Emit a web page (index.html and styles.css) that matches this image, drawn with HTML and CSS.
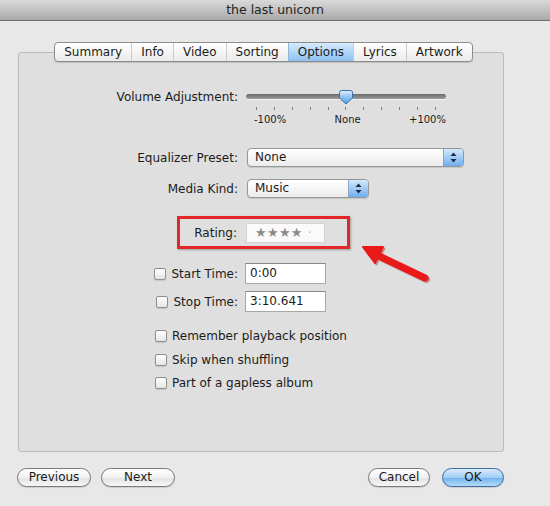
FILE: index.html
```html
<!DOCTYPE html>
<html>
<head>
<meta charset="utf-8">
<title>the last unicorn</title>
<link rel="stylesheet" href="styles.css">
</head>
<body>
<div class="window">
  <div class="titlebar">the last unicorn</div>
  <div class="content">
    <div class="tabs">
      <div class="tabgroup">
        <div class="tab">Summary</div>
        <div class="tab">Info</div>
        <div class="tab">Video</div>
        <div class="tab">Sorting</div>
        <div class="tab active">Options</div>
        <div class="tab">Lyrics</div>
        <div class="tab">Artwork</div>
      </div>
    </div>
    <div class="panel">
      <div class="row row-volume">
        <div class="lbl">Volume Adjustment:</div>
        <div class="slider">
          <div class="track"></div>
          <svg class="thumb" width="16" height="16" viewBox="0 0 16 16">
            <defs>
              <linearGradient id="tg" x1="0" y1="0" x2="0" y2="1">
                <stop offset="0" stop-color="#e2f0fd"/>
                <stop offset="0.5" stop-color="#8cc2f2"/>
                <stop offset="1" stop-color="#4f9de6"/>
              </linearGradient>
            </defs>
            <path d="M3.5 1.5 H12.5 Q14.5 1.5 14.5 3.5 V9 L8 15 L1.5 9 V3.5 Q1.5 1.5 3.5 1.5 Z" fill="url(#tg)" stroke="#3c6ea8" stroke-width="1"/>
          </svg>
          <div class="ticks">
            <span></span><span></span><span></span><span></span><span></span><span></span><span></span><span></span><span></span><span></span><span></span>
          </div>
          <div class="scale"><span>-100%</span><span>None</span><span>+100%</span></div>
        </div>
      </div>
      <div class="row row-eq">
        <div class="lbl">Equalizer Preset:</div>
        <div class="popup popup-eq">
          <div class="val">None</div>
          <div class="step">
            <svg width="7" height="11" viewBox="0 0 7 11"><path d="M3.5 0.5 L6.5 4 H0.5 Z M3.5 10.5 L6.5 7 H0.5 Z" fill="#1d2c44"/></svg>
          </div>
        </div>
      </div>
      <div class="row row-media">
        <div class="lbl">Media Kind:</div>
        <div class="popup popup-media">
          <div class="val">Music</div>
          <div class="step">
            <svg width="7" height="11" viewBox="0 0 7 11"><path d="M3.5 0.5 L6.5 4 H0.5 Z M3.5 10.5 L6.5 7 H0.5 Z" fill="#1d2c44"/></svg>
          </div>
        </div>
      </div>
      <div class="row row-rating">
        <div class="ratingbox">
          <div class="rlbl">Rating:</div>
          <div class="rfield"><span class="stars">★★★★</span><span class="dot">·</span></div>
        </div>
      </div>
      <div class="row row-start">
        <div class="lbl chklbl"><span class="chk"></span>Start Time:</div>
        <div class="field">0:00</div>
      </div>
      <div class="row row-stop">
        <div class="lbl chklbl"><span class="chk"></span>Stop Time:</div>
        <div class="field">3:10.641</div>
      </div>
      <div class="row opt opt-first"><span class="chk"></span>Remember playback position</div>
      <div class="row opt opt-second"><span class="chk"></span>Skip when shuffling</div>
      <div class="row opt opt-third"><span class="chk"></span>Part of a gapless album</div>
    </div>
    <div class="buttons">
      <div class="btn btn-prev">Previous</div>
      <div class="btn btn-next">Next</div>
      <div class="spacer"></div>
      <div class="btn btn-cancel">Cancel</div>
      <div class="btn btn-ok">OK</div>
    </div>
  </div>
  <svg class="arrow" width="80" height="46" viewBox="0 0 80 46">
    <g transform="translate(1.5,1.5)" fill="#7a0a0a" stroke="#7a0a0a" opacity="0.35">
      <line x1="22" y1="15" x2="70" y2="38" stroke-width="7" stroke-linecap="round"/>
      <path d="M8 7 L28 7 L20 23 Z" stroke-width="2" stroke-linejoin="round"/>
    </g>
    <g fill="#ea1a1a" stroke="#ea1a1a">
      <line x1="22" y1="15" x2="70" y2="38" stroke-width="7" stroke-linecap="round"/>
      <path d="M8 7 L28 7 L20 23 Z" stroke-width="2" stroke-linejoin="round"/>
    </g>
  </svg>
</div>
</body>
</html>
```
FILE: styles.css
```css
body {
  margin: 0;
  font-family: "DejaVu Sans", "Liberation Sans", sans-serif;
  font-size: 12px;
  color: #1b1b1b;
}

.window {
  width: 550px;
  height: 506px;
  background: #e8e8e8;
  position: relative;
  overflow: hidden;
}

.titlebar {
  height: 20px;
  line-height: 20px;
  text-align: center;
  font-size: 12.5px;
  color: #222;
  background: linear-gradient(#dadada, #a9a9a9);
  border-bottom: 1px solid #6f6f6f;
}

.content {
  padding: 21px 46px 0 18px;
}

.tabs {
  display: flex;
  justify-content: center;
  position: relative;
  z-index: 1;
  padding-left: 5px;
}

.tabgroup {
  display: flex;
  height: 20px;
  box-sizing: border-box;
  border: 1px solid #8c8c8c;
  border-radius: 4px;
  background: linear-gradient(#ffffff, #ebebeb);
  box-shadow: 0 1px 1px rgba(0, 0, 0, 0.15);
  overflow: hidden;
}

.tab {
  padding: 0 9px;
  line-height: 18px;
  border-left: 1px solid #cacaca;
}

.tab:first-child {
  border-left: none;
}

.tab.active {
  background: linear-gradient(#d6eafc, #8cc2f3);
  border-left-color: #94b4d6;
}

.panel {
  margin-top: -10px;
  height: 400px;
  box-sizing: border-box;
  border: 1px solid #bababa;
  border-radius: 3px;
  background: #dfdfdf;
  padding-top: 36px;
  display: flex;
  flex-direction: column;
}

.row {
  display: flex;
  align-items: center;
}

.lbl {
  width: 219px;
  flex: none;
  text-align: right;
  margin-right: 8px;
  line-height: 16px;
}

.row-volume {
  align-items: flex-start;
}

.slider {
  width: 200px;
  position: relative;
}

.track {
  margin-top: 5px;
  height: 5px;
  border-radius: 3px;
  background: linear-gradient(#6a6a6a, #9a9a9a);
  box-shadow: 0 1px 0 rgba(255, 255, 255, 0.6);
}

.thumb {
  position: absolute;
  left: 92px;
  top: 0;
}

.ticks {
  margin-top: 8px;
  height: 3px;
  display: flex;
  justify-content: space-between;
  padding: 0 10px;
}

.ticks span {
  width: 1px;
  height: 3px;
  background: #7d7d7d;
}

.scale {
  margin-top: 4px;
  display: flex;
  justify-content: space-between;
  padding-left: 8px;
  font-size: 10px;
  line-height: 12px;
}

.row-eq {
  margin-top: 22px;
}

.popup {
  height: 19px;
  box-sizing: border-box;
  border: 1px solid #969696;
  border-radius: 4px;
  background: linear-gradient(#ffffff, #ececec);
  box-shadow: 0 1px 1px rgba(0, 0, 0, 0.12);
  display: flex;
  overflow: hidden;
  margin-left: 1px;
}

.popup .val {
  flex: 1;
  padding-left: 7px;
  line-height: 17px;
}

.popup .step {
  width: 19px;
  background: linear-gradient(#d4e9fc, #6eaeee);
  border-left: 1px solid #8aa6c6;
  display: flex;
  align-items: center;
  justify-content: center;
}

.popup-eq {
  width: 217px;
}

.popup-media {
  width: 122px;
}

.row-media {
  margin-top: 12px;
}

.row-rating {
  margin-top: 18px;
}

.ratingbox {
  margin-left: 158px;
  width: 173px;
  height: 33px;
  box-sizing: border-box;
  border: 3px solid #e3262a;
  box-shadow: 1px 1px 2px rgba(0, 0, 0, 0.3);
  display: flex;
  align-items: center;
  padding-right: 22px;
}

.rlbl {
  flex: 1;
  text-align: right;
  margin-right: 9px;
}

.rfield {
  width: 79px;
  height: 20px;
  box-sizing: border-box;
  background: #fafafa;
  border: 1px solid #d4d4d4;
  display: flex;
  align-items: center;
  padding-left: 8px;
}

.stars {
  color: #8a8a8a;
  font-size: 13px;
  letter-spacing: 0.3px;
}

.dot {
  color: #b8b8b8;
  margin-left: 5px;
}

.row-start {
  margin-top: 14px;
}

.row-stop {
  margin-top: 7px;
}

.chklbl {
  display: flex;
  justify-content: flex-end;
  align-items: center;
  margin-right: 7px;
}

.chk {
  display: inline-block;
  width: 12px;
  height: 12px;
  box-sizing: border-box;
  border: 1px solid #8f8f8f;
  border-radius: 2px;
  background: linear-gradient(#ffffff, #e4e4e4);
  box-shadow: 0 1px 1px rgba(0, 0, 0, 0.12);
  margin-right: 5px;
  flex: none;
}

.field {
  width: 81px;
  height: 21px;
  box-sizing: border-box;
  background: #ffffff;
  border: 1px solid #a8a8a8;
  border-top-color: #8a8a8a;
  padding-left: 4px;
  line-height: 19px;
}

.opt {
  margin-left: 136px;
  line-height: 16px;
}

.opt-first {
  margin-top: 16px;
}

.opt-second {
  margin-top: 8px;
}

.opt-third {
  margin-top: 7px;
}

.buttons {
  display: flex;
  margin-top: 16px;
  margin-left: -1px;
}

.spacer {
  flex: 1;
}

.btn {
  height: 19px;
  box-sizing: border-box;
  border: 1px solid #7a7a7a;
  border-radius: 10px;
  background: linear-gradient(#ffffff, #f1f1f1 50%, #e2e2e2 51%, #f6f6f6);
  text-align: center;
  line-height: 17px;
  box-shadow: 0 1px 1px rgba(0, 0, 0, 0.12);
}

.btn-prev,
.btn-next {
  width: 74px;
}

.btn-next {
  margin-left: 10px;
}

.btn-cancel,
.btn-ok {
  width: 62px;
}

.btn-ok {
  margin-left: 12px;
  border-color: #3e6aa6;
  background: linear-gradient(#d8ecfd, #a0cdf5 50%, #6fb0ee 51%, #b5dcfb);
}

.arrow {
  position: absolute;
  left: 355px;
  top: 240px;
}
```
